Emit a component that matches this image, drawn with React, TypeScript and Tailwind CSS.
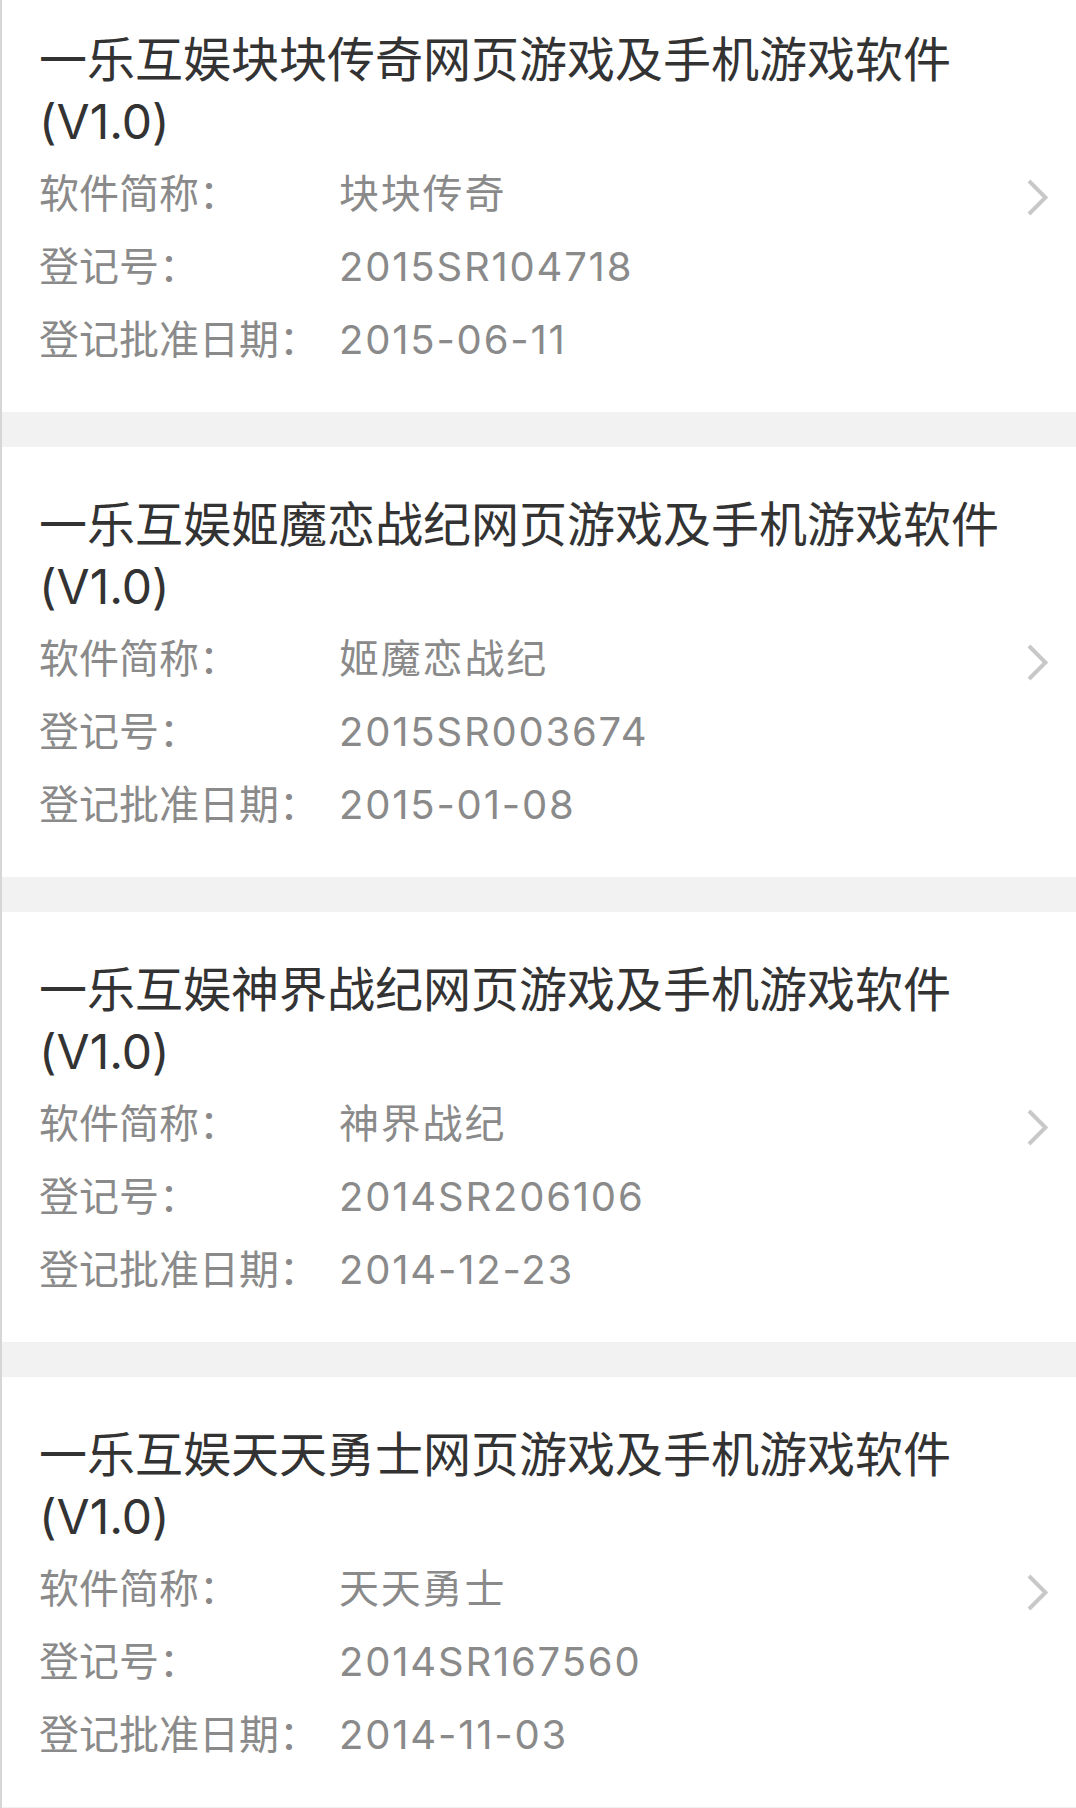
const items = [
  { title: '一乐互娱块块传奇网页游戏及手机游戏软件(V1.0)', short: '块块传奇', reg: '2015SR104718', date: '2015-06-11' },
  { title: '一乐互娱姬魔恋战纪网页游戏及手机游戏软件(V1.0)', short: '姬魔恋战纪', reg: '2015SR003674', date: '2015-01-08' },
  { title: '一乐互娱神界战纪网页游戏及手机游戏软件(V1.0)', short: '神界战纪', reg: '2014SR206106', date: '2014-12-23' },
  { title: '一乐互娱天天勇士网页游戏及手机游戏软件(V1.0)', short: '天天勇士', reg: '2014SR167560', date: '2014-11-03' },
];

function Chevron() {
  return (
    <svg width="21" height="37" viewBox="0 0 21 37" className="shrink-0">
      <polyline points="2,2 18.5,18.5 2,35" fill="none" stroke="#c8c8c8" strokeWidth="4" />
    </svg>
  );
}

function Row({ label, value }: { label: string; value: string }) {
  return (
    <div className="flex text-[40px] leading-[73px] text-[#8a8a8a]">
      <span className="w-[300px] shrink-0">{label}</span>
      <span className="tracking-[1.8px]">{value}</span>
    </div>
  );
}

export default function App() {
  return (
    <div className="h-[1808px] overflow-hidden bg-[#f2f2f2] border-l-2 border-[#d6d6d6] font-['Inter','Noto_Sans_CJK_SC',sans-serif]">
      <div className="-mt-[18px] flex flex-col gap-[35px]">
        {items.map((it) => (
          <div key={it.reg} className="flex items-center bg-white pr-[28px]">
            <div className="min-w-0 flex-1 pl-[37px] pr-[20px] pt-[47px] pb-[36px]">
              <div className="text-[48px] leading-[62px] text-[#333333]">{it.title}</div>
              <div className="mt-[4px]">
                <Row label="软件简称：" value={it.short} />
                <Row label="登记号：" value={it.reg} />
                <Row label="登记批准日期：" value={it.date} />
              </div>
            </div>
            <Chevron />
          </div>
        ))}
      </div>
    </div>
  );
}
